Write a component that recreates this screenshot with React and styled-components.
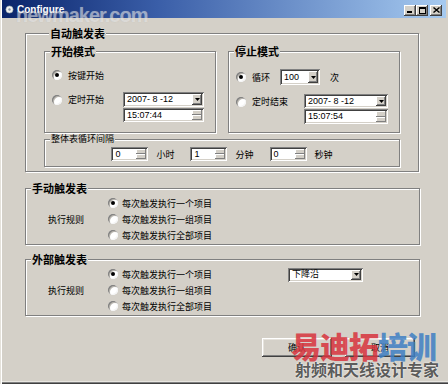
import React from 'react';
import styled, { createGlobalStyle } from 'styled-components';

const Global = createGlobalStyle`
  html, body { margin: 0; padding: 0; background: #d4d0c8; }
  *, *::before, *::after { box-sizing: border-box; }
  body { font-family: "Noto Sans CJK SC", "Liberation Sans", sans-serif; color: #000; }
`;

const Window = styled.div`
  position: relative;
  width: 448px;
  height: 384px;
  background: #d4d0c8;
  display: flex;
  flex-direction: column;
  overflow: hidden;
  box-shadow: inset 1px 0 #e4e1da, inset 2px 0 #fff, inset 0 -1px #404040, inset 0 -2px #808080, inset 0 -3px #e8e6e0;
`;

const TitleBar = styled.div`
  flex: none;
  height: 18px;
  margin: 0 2px;
  display: flex;
  align-items: center;
  padding: 0 4px 0 3px;
  background: linear-gradient(to right, #0a246a, #3a5ea8 35%, #a6caf0);
  color: #fff;
  font: bold 10px "Liberation Sans", sans-serif;
`;

const TitleText = styled.span`
  margin-left: 3px;
  flex: 1;
`;

const CaptionButtons = styled.div`
  display: flex;
  gap: 0;
  margin-top: 2px;
`;

const CaptionButton = styled.span`
  width: 12px;
  height: 11px;
  margin-left: ${p => (p.$sep ? '2px' : '0')};
  background: #d4d0c8;
  box-shadow: inset -1px -1px #404040, inset 1px 1px #fff, inset -2px -2px #808080;
  display: flex;
  align-items: center;
  justify-content: center;
`;

const Body = styled.div`
  flex: 1;
  display: flex;
  flex-direction: column;
  padding: 8px 28px 0 25px;
`;

const Group = styled.fieldset`
  margin: ${p => p.$m || '0'};
  padding: ${p => p.$pad || '0'};
  border: 1px solid #808080;
  box-shadow: inset 1px 1px #fff, 1px 1px #fff;
  min-width: 0;
  height: ${p => (p.$h ? `${p.$h}px` : 'auto')};
  width: ${p => (p.$w ? `${p.$w}px` : 'auto')};
  flex: none;
`;

const Legend = styled.legend`
  padding: 0 1px;
  margin-left: 5px;
  background: #d4d0c8;
  font-size: ${p => (p.$bold ? '11px' : '9px')};
  font-weight: ${p => (p.$bold ? 700 : 400)};
  line-height: ${p => (p.$bold ? '14px' : '12px')};
  color: #000;
`;

const ModeRow = styled.div`
  display: flex;
  gap: 12px;
`;

const ModeContent = styled.div`
  display: flex;
  flex-direction: column;
  padding: ${p => p.$top}px 0 0 7px;
`;

const Option = styled.label`
  display: flex;
  align-items: center;
  gap: 6px;
  height: ${p => (p.$h ? `${p.$h}px` : '16px')};
  width: ${p => (p.$w ? `${p.$w}px` : 'auto')};
  flex: none;
  font-size: 9px;
  white-space: nowrap;
`;

const Radio = styled.span`
  position: relative;
  flex: none;
  width: 10px;
  height: 10px;
  border-radius: 50%;
  background: #fff;
  box-shadow: inset 1px 1px #808080, inset -1px -1px #f4f4f4, inset 2px 2px #b8b5ae;
  &::after {
    content: '';
    display: ${p => (p.$on ? 'block' : 'none')};
    position: absolute;
    left: 3px;
    top: 3px;
    width: 4px;
    height: 4px;
    border-radius: 50%;
    background: #000;
  }
`;

const Line = styled.div`
  display: flex;
  align-items: ${p => p.$align || 'center'};
  margin-top: ${p => p.$mt || 0}px;
`;

const Stack = styled.div`
  display: flex;
  flex-direction: column;
  gap: 1px;
`;

const Field = styled.div`
  display: flex;
  width: ${p => p.$w}px;
  height: ${p => p.$h}px;
  flex: none;
  padding: 2px;
  background: #fff;
  box-shadow: inset 1px 1px #808080, inset -1px -1px #fff, inset 2px 2px #404040, inset -2px -2px #d4d0c8;
`;

const FieldText = styled.span`
  flex: 1;
  display: flex;
  align-items: center;
  padding-left: 2px;
  font: 9px/1 "Liberation Sans", "Noto Sans CJK SC", sans-serif;
  white-space: pre;
  color: #000;
`;

const DropButton = styled.span`
  width: 10px;
  flex: none;
  background: #d4d0c8;
  box-shadow: inset -1px -1px #404040, inset 1px 1px #fff, inset -2px -2px #808080;
  display: flex;
  align-items: center;
  justify-content: center;
`;

const SpinButtons = styled.span`
  width: 10px;
  flex: none;
  display: flex;
  flex-direction: column;
`;

const SpinHalf = styled.span`
  flex: 1;
  background: #d4d0c8;
  box-shadow: inset -1px -1px #808080, inset 1px 1px #fff;
`;

const Text = styled.span`
  font-size: 9px;
  margin-left: ${p => p.$ml || 0}px;
  white-space: nowrap;
`;

const IntervalRow = styled.div`
  display: flex;
  justify-content: center;
  gap: 16px;
  padding: 2px 0 5px;
`;

const IntervalItem = styled.div`
  display: flex;
  align-items: center;
  gap: 8px;
`;

const RuleGrid = styled.div`
  display: grid;
  grid-template-columns: 60px 180px auto;
  grid-auto-rows: 16px;
  padding: 0 0 1px 22px;
`;

const RuleLabel = styled.div`
  grid-column: 1;
  grid-row: 1 / span 3;
  align-self: center;
  font-size: 9px;
`;

const RuleOption = styled(Option)`
  grid-column: 2;
  gap: 4px;
`;

const RuleCombo = styled.div`
  grid-column: 3;
  grid-row: 1;
  align-self: center;
  padding-top: 1px;
`;

const Footer = styled.div`
  display: flex;
  justify-content: flex-end;
  gap: 13px;
  margin-top: 22px;
  padding-right: 5px;
`;

const Button = styled.button`
  width: 70px;
  height: 19px;
  padding: 0;
  border: none;
  background: #d4d0c8;
  box-shadow: inset -1px -1px #404040, inset 1px 1px #fff, inset -2px -2px #808080, inset 2px 2px #e6e3dd;
  font: 9px "Noto Sans CJK SC", sans-serif;
  color: #000;
`;

const MarkTop = styled.div`
  position: absolute;
  left: 16px;
  top: 4px;
  font: bold 20px "Liberation Sans", sans-serif;
  letter-spacing: -1px;
  color: rgba(255, 255, 255, 0.45);
  text-shadow: 0 0 1px rgba(150, 150, 150, 0.35);
  pointer-events: none;
`;

const MarkBottom = styled.div`
  position: absolute;
  left: 291px;
  top: 327px;
  display: flex;
  flex-direction: column;
  pointer-events: none;
`;

const MarkBig = styled.div`
  font: 900 30px/36px "Noto Sans CJK SC", sans-serif;
  letter-spacing: -1px;
  white-space: nowrap;
`;

const MarkColor = styled.span`
  color: ${p => p.$c};
  opacity: 0.85;
`;

const MarkSmall = styled.div`
  margin-top: -4px;
  margin-left: 4px;
  font: 700 16px/20px "Noto Sans CJK SC", sans-serif;
  color: rgba(50, 50, 50, 0.8);
  text-shadow: 0 0 2px #fff;
  white-space: nowrap;
`;

const Down = () => (
  <svg width="5" height="3" viewBox="0 0 5 3"><path d="M0 0h5L2.5 3z" fill="#000" /></svg>
);

const Combo = ({ w, h, value }) => (
  <Field $w={w} $h={h}>
    <FieldText>{value}</FieldText>
    <DropButton><Down /></DropButton>
  </Field>
);

const Spin = ({ w, h, value }) => (
  <Field $w={w} $h={h}>
    <FieldText>{value}</FieldText>
    <SpinButtons><SpinHalf /><SpinHalf /></SpinButtons>
  </Field>
);

const RuleRows = ({ extra }) => (
  <RuleGrid>
    <RuleLabel>执行规则</RuleLabel>
    <RuleOption><Radio $on />每次触发执行一个项目</RuleOption>
    <RuleOption><Radio />每次触发执行一组项目</RuleOption>
    <RuleOption><Radio />每次触发执行全部项目</RuleOption>
    {extra && <RuleCombo>{extra}</RuleCombo>}
  </RuleGrid>
);

export default function App() {
  return (
    <>
      <Global />
      <Window>
        <TitleBar>
          <svg width="9" height="9" viewBox="0 0 9 9">
            <circle cx="4.5" cy="4.5" r="3.6" fill="#f2f2f2" stroke="#9aa" strokeWidth="0.6" />
            <circle cx="4.5" cy="4.5" r="1.2" fill="#8899aa" />
          </svg>
          <TitleText>Configure</TitleText>
          <CaptionButtons>
            <CaptionButton>
              <svg width="6" height="6" viewBox="0 0 6 6"><rect x="0" y="4" width="5" height="2" fill="#000" /></svg>
            </CaptionButton>
            <CaptionButton>
              <svg width="7" height="7" viewBox="0 0 7 7"><rect x="0.5" y="0.5" width="6" height="6" fill="none" stroke="#000" /><rect x="0" y="0" width="7" height="2" fill="#000" /></svg>
            </CaptionButton>
            <CaptionButton $sep>
              <svg width="7" height="6" viewBox="0 0 7 6"><path d="M0.5 0.5l6 5M6.5 0.5l-6 5" stroke="#000" strokeWidth="1.4" /></svg>
            </CaptionButton>
          </CaptionButtons>
        </TitleBar>

        <Body>
          <Group $pad="4px 18px 4px 18px" $m="0 1px 0 0">
            <Legend $bold>自动触发表</Legend>
            <ModeRow>
              <Group $w={172} $h={89}>
                <Legend $bold>开始模式</Legend>
                <ModeContent $top={9}>
                  <Option><Radio $on />按键开始</Option>
                  <Line $mt={9} $align="flex-start">
                    <Option $w={71} $h={15}><Radio />定时开始</Option>
                    <Stack>
                      <Combo w={81} h={15} value="2007- 8 -12" />
                      <Spin w={81} h={14} value="15:07:44" />
                    </Stack>
                  </Line>
                </ModeContent>
              </Group>
              <Group $w={172} $h={89}>
                <Legend $bold>停止模式</Legend>
                <ModeContent $top={11}>
                  <Line>
                    <Option $w={44}><Radio $on />循环</Option>
                    <Combo w={40} h={16} value="100" />
                    <Text $ml={10}>次</Text>
                  </Line>
                  <Line $mt={9} $align="flex-start">
                    <Option $w={68} $h={15}><Radio />定时结束</Option>
                    <Stack>
                      <Combo w={84} h={14} value="2007- 8 -12" />
                      <Spin w={84} h={15} value="15:07:54" />
                    </Stack>
                  </Line>
                </ModeContent>
              </Group>
            </ModeRow>
            <Group>
              <Legend>整体表循环间隔</Legend>
              <IntervalRow>
                <IntervalItem><Spin w={37} h={14} value="0" /><Text>小时</Text></IntervalItem>
                <IntervalItem><Spin w={37} h={14} value="1" /><Text>分钟</Text></IntervalItem>
                <IntervalItem><Spin w={37} h={14} value="0" /><Text>秒钟</Text></IntervalItem>
              </IntervalRow>
            </Group>
          </Group>

          <Group $m="9px 0 0 0">
            <Legend $bold>手动触发表</Legend>
            <RuleRows />
          </Group>

          <Group $m="7px 0 0 0">
            <Legend $bold>外部触发表</Legend>
            <RuleRows extra={<Combo w={75} h={14} value="下降沿" />} />
          </Group>

          <Footer>
            <Button>确认</Button>
            <Button>取消</Button>
          </Footer>
        </Body>

        <MarkTop>newmaker.com</MarkTop>
        <MarkBottom>
          <MarkBig>
            <MarkColor $c="#d8343e">易迪拓</MarkColor>
            <MarkColor $c="#3f7fc4">培训</MarkColor>
          </MarkBig>
          <MarkSmall>射频和天线设计专家</MarkSmall>
        </MarkBottom>
      </Window>
    </>
  );
}
